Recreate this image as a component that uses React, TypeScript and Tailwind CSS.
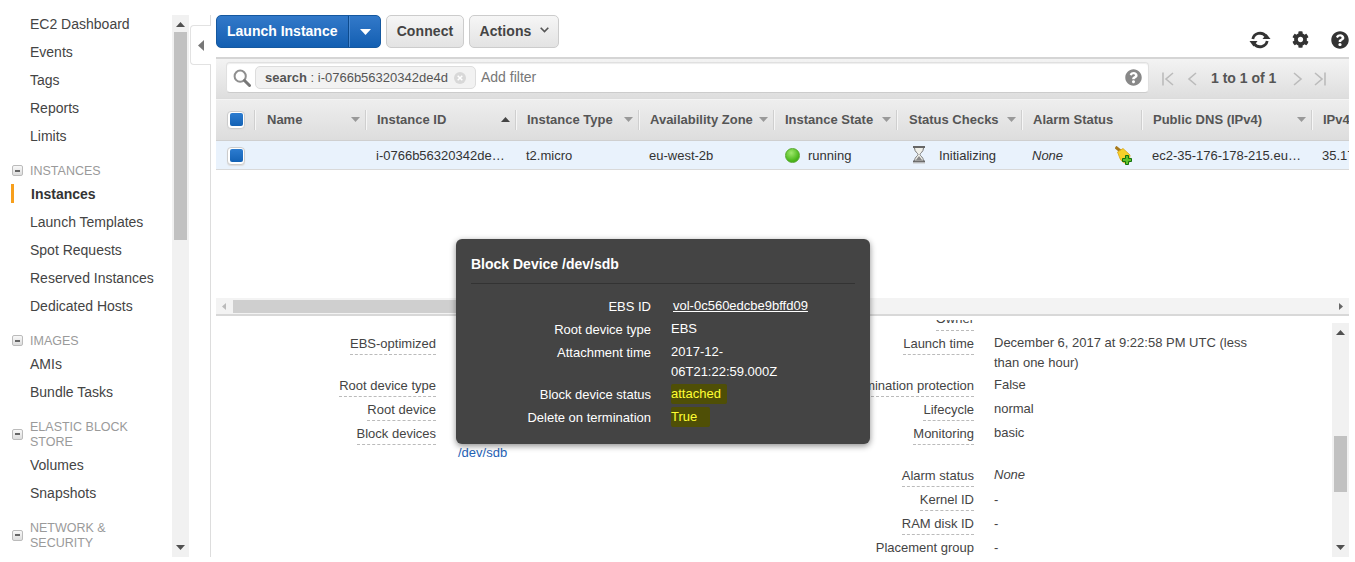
import React from "react";
import { FaCog, FaQuestionCircle } from "react-icons/fa";

const font = "font-['Liberation_Sans',Arial,sans-serif]";

const Caret = ({ up = false, dark = false }: { up?: boolean; dark?: boolean }) => (
  <svg width="9" height="5" viewBox="0 0 9 5" className="shrink-0">
    <path d={up ? "M0 5 L4.5 0 L9 5 Z" : "M0 0 L9 0 L4.5 5 Z"} fill={dark ? "#444" : "#999"} />
  </svg>
);

const Minus = () => (
  <span className="w-[11px] h-[11px] rounded-[2px] border border-[#bbb] bg-gradient-to-b from-[#f8f8f8] to-[#ddd] flex items-center justify-center shrink-0">
    <span className="w-[5px] h-[2px] bg-[#666]" />
  </span>
);

const NavItem = ({ label, active = false }: { label: string; active?: boolean }) => (
  <div className={`h-[28px] flex items-center pl-[30px] text-[14px] relative ${active ? "font-bold text-[#333]" : "text-[#444]"}`}>
    {active && <span className="absolute left-[11px] top-[4px] w-[3px] h-[19px] bg-[#f79f1c]" />}
    <span className={active ? "pl-px" : ""}>{label}</span>
  </div>
);

const NavHead = ({ lines, className = "" }: { lines: string[]; className?: string }) => (
  <div className={`flex items-center pl-[12px] gap-[7px] text-[12.5px] leading-[15px] text-[#9a9a9a] ${className}`}>
    <Minus />
    <div className="relative top-px">
      {lines.map((l) => (
        <div key={l}>{l}</div>
      ))}
    </div>
  </div>
);

const Sidebar = () => (
  <div className="w-[172px] shrink-0 -mt-[5px]">
    <NavItem label="EC2 Dashboard" />
    <NavItem label="Events" />
    <NavItem label="Tags" />
    <NavItem label="Reports" />
    <NavItem label="Limits" />
    <NavHead lines={["INSTANCES"]} className="mt-[13px] mb-[2px]" />
    <NavItem label="Instances" active />
    <NavItem label="Launch Templates" />
    <NavItem label="Spot Requests" />
    <NavItem label="Reserved Instances" />
    <NavItem label="Dedicated Hosts" />
    <NavHead lines={["IMAGES"]} className="mt-[13px] mb-[2px]" />
    <NavItem label="AMIs" />
    <NavItem label="Bundle Tasks" />
    <NavHead lines={["ELASTIC BLOCK", "STORE"]} className="mt-[13px] mb-[2px]" />
    <NavItem label="Volumes" />
    <NavItem label="Snapshots" />
    <NavHead lines={["NETWORK &", "SECURITY"]} className="mt-[13px]" />
  </div>
);

const VScroll = ({ thumbTop, thumbH, w = 17 }: { thumbTop: number; thumbH: number; w?: number }) => (
  <div className="h-full bg-[#f1f1f1] relative shrink-0" style={{ width: w }}>
    <svg width="9" height="5" viewBox="0 0 9 5" className="absolute left-[4px] top-[7px]"><path d="M0 5 L4.5 0 L9 5 Z" fill="#505050" /></svg>
    <svg width="9" height="5" viewBox="0 0 9 5" className="absolute left-[4px] bottom-[7px]"><path d="M0 0 L9 0 L4.5 5 Z" fill="#505050" /></svg>
    <div className="absolute left-[2px] right-[2px] bg-[#c1c1c1]" style={{ top: thumbTop, height: thumbH }} />
  </div>
);

const Btn = ({ children, className = "" }: { children: React.ReactNode; className?: string }) => (
  <div className={`h-[33px] rounded-[5px] border border-[#ccc] bg-gradient-to-b from-[#f6f6f6] to-[#e3e3e3] flex items-center justify-center text-[14px] font-bold text-[#444] tracking-[0.1px] ${className}`}>
    {children}
  </div>
);

const Toolbar = () => (
  <div className="h-[42px] flex items-start shrink-0">
    <div className="h-[33px] w-[165px] rounded-[5px] border border-[#15589f] bg-gradient-to-b from-[#3279c9] to-[#125fb2] flex text-white text-[14px] font-bold">
      <div className="w-[132px] flex items-center pl-[10px] border-r border-[#0d4a8c]">Launch Instance</div>
      <div className="flex-1 flex items-center justify-center border-l border-[#4a8bd4]">
        <svg width="11" height="6" viewBox="0 0 11 6"><path d="M0 0 L11 0 L5.5 6 Z" fill="#fff" /></svg>
      </div>
    </div>
    <Btn className="w-[78px] ml-[5px]">Connect</Btn>
    <Btn className="w-[90px] ml-[5px] gap-[8px]">
      Actions
      <svg width="9" height="6" viewBox="0 0 9 6" className="mb-[3px]"><path d="M0.7 0.7 L4.5 4.6 L8.3 0.7" fill="none" stroke="#555" strokeWidth="1.6" /></svg>
    </Btn>
    <div className="ml-auto flex items-center h-[33px] mt-[8px] text-[#333]">
      <svg width="22" height="20" viewBox="0 0 22 20" className="mr-[21px]">
        <path d="M3.8 9 A7.3 7.3 0 0 1 16.6 6" fill="none" stroke="#333" strokeWidth="2.8" />
        <path d="M18.2 11 A7.3 7.3 0 0 1 5.4 14" fill="none" stroke="#333" strokeWidth="2.8" />
        <path d="M13.5 9 L21.5 9 L17.5 4 Z" fill="#333" />
        <path d="M0.5 11 L8.5 11 L4.5 16.5 Z" fill="#333" />
      </svg>
      <FaCog size={17} className="text-[#333] mr-[22px]" />
      <FaQuestionCircle size={18} className="text-[#333]" />
    </div>
  </div>
);

const Chevron = ({ dir, bar = false }: { dir: "l" | "r"; bar?: boolean }) => (
  <svg width="12" height="14" viewBox="0 0 12 14">
    {dir === "l" ? (
      <>
        {bar && <path d="M1 0.5 V13.5" stroke="#bbb" strokeWidth="1.6" />}
        <path d={bar ? "M11 1 L4 7 L11 13" : "M9 1 L2 7 L9 13"} fill="none" stroke="#bbb" strokeWidth="1.6" />
      </>
    ) : (
      <>
        {bar && <path d="M11 0.5 V13.5" stroke="#bbb" strokeWidth="1.6" />}
        <path d={bar ? "M1 1 L8 7 L1 13" : "M3 1 L10 7 L3 13"} fill="none" stroke="#bbb" strokeWidth="1.6" />
      </>
    )}
  </svg>
);

const FilterBar = () => (
  <div className="h-[42px] shrink-0 border-t-2 border-[#d5d5d5] border-b border-b-[#dcdcdc] bg-gradient-to-b from-[#f3f3f3] to-[#dedede] flex items-center pl-[10px] pb-[2px]">
    <div className="w-[923px] h-[31px] rounded-[4px] bg-white border border-[#e0e0e0] border-b-[#ccc] flex items-center pl-[6px] shadow-[inset_0_1px_1px_#eee]">
      <svg width="18" height="18" viewBox="0 0 18 18" className="shrink-0">
        <circle cx="7.2" cy="7.2" r="5.6" fill="none" stroke="#8f8f8f" strokeWidth="2" />
        <path d="M11.5 11.5 L16.5 16.5" stroke="#777" strokeWidth="3" strokeLinecap="round" />
      </svg>
      <div className="ml-[4px] w-[221px] h-[23px] rounded-[5px] border border-[#ddd] bg-[#f2f2f2] flex items-center pl-[9px] text-[13px] text-[#555] whitespace-nowrap shrink-0">
        <span className="font-bold">search</span>
        <span>&nbsp;: i-0766b56320342de4d</span>
        <span className="ml-auto mr-[9px] w-[12px] h-[12px] rounded-full bg-[#d8d8d8] flex items-center justify-center">
          <svg width="6" height="6" viewBox="0 0 6 6"><path d="M0.7 0.7 L5.3 5.3 M5.3 0.7 L0.7 5.3" stroke="#fff" strokeWidth="1.5" /></svg>
        </span>
      </div>
      <span className="ml-[5px] text-[14px] leading-[14px] pb-[2px] text-[#777]">Add filter</span>
      <FaQuestionCircle size={17} className="ml-auto mr-[6px] text-[#888]" />
    </div>
    <div className="flex items-center ml-[13px] mt-[2px]">
      <Chevron dir="l" bar />
      <span className="ml-[13px]"><Chevron dir="l" /></span>
      <span className="ml-[12px] text-[14px] font-bold text-[#555] whitespace-nowrap">1 to 1 of 1</span>
      <span className="ml-[15px]"><Chevron dir="r" /></span>
      <span className="ml-[11px]"><Chevron dir="r" bar /></span>
    </div>
  </div>
);

const gridCols = "grid-cols-[39px_111px_150px_123px_135px_123px_125px_120px_170px_37px]";

const Check = () => (
  <span className="w-[18px] h-[18px] rounded-[4px] border border-[#ccc] bg-white flex items-center justify-center shadow-[0_1px_1px_#ddd]">
    <span className="w-[13px] h-[13px] rounded-[2px] bg-gradient-to-b from-[#2c7cd0] to-[#1362b5]" />
  </span>
);

const HeadCell = ({ label, caret = true, up = false, wide = false }: { label: string; caret?: boolean; up?: boolean; wide?: boolean }) => (
  <div className={`h-[20px] border-l border-[#f6f6f6] shadow-[-1px_0_0_#cfcfcf] flex items-center pr-[6px] font-bold text-[13px] leading-[18px] pb-px text-[#555] whitespace-nowrap overflow-hidden ${wide ? "pl-[11px]" : "pl-[10px]"}`}>
    <span>{label}</span>
    {caret && <span className="ml-auto"><Caret up={up} dark={up} /></span>}
  </div>
);

const Table = () => (
  <div className="shrink-0">
    <div className={`grid ${gridCols} h-[42px] items-center bg-gradient-to-b from-[#eeeeee] to-[#dddddd] border-t border-[#f4f4f4] border-b border-b-[#cfcfcf]`}>
      <div className="flex justify-center pl-px pb-px"><Check /></div>
      <HeadCell label="Name" wide />
      <HeadCell label="Instance ID" up />
      <HeadCell label="Instance Type" />
      <HeadCell label="Availability Zone" />
      <HeadCell label="Instance State" />
      <HeadCell label="Status Checks" wide />
      <HeadCell label="Alarm Status" caret={false} />
      <HeadCell label="Public DNS (IPv4)" />
      <HeadCell label="IPv4" caret={false} />
    </div>
    <div className={`grid ${gridCols} h-[29px] items-center bg-[#e9f2fc] border-b border-[#d9d9d9] text-[13px] text-[#333] whitespace-nowrap overflow-hidden pt-px`}>
      <div className="flex justify-center pl-px"><Check /></div>
      <div />
      <div className="pl-[10px] overflow-hidden">i-0766b56320342de…</div>
      <div className="pl-[10px]">t2.micro</div>
      <div className="pl-[10px]">eu-west-2b</div>
      <div className="pl-[11px] flex items-center gap-[8px]">
        <span className="w-[15px] h-[15px] rounded-full bg-[radial-gradient(circle_at_40%_30%,#9fe86c,#4cb81c_65%,#3a9a12)] border border-[#55a82d]" />
        running
      </div>
      <div className="pl-[15px] flex items-center gap-[13px]">
        <svg width="14" height="18" viewBox="0 0 14 18" className="mb-[2px]">
          <path d="M1 1 H13 M1 15.5 H13" stroke="#666" strokeWidth="2" />
          <path d="M2.5 2 C2.5 6 6 7 6 8.5 C6 10 2.5 11 2.5 15 H11.5 C11.5 11 8 10 8 8.5 C8 7 11.5 6 11.5 2" fill="#f0f0ea" stroke="#777" strokeWidth="1" />
          <path d="M3.5 14.5 L7 10 L10.5 14.5 Z" fill="#888" />
          <path d="M1 17 H13" stroke="#c4c4c4" strokeWidth="1" />
        </svg>
        Initializing
      </div>
      <div className="pl-[10px] flex items-center pr-[8px]">
        <span className="italic">None</span>
        <svg width="18" height="19" viewBox="0 0 18 19" className="ml-auto mr-[1px]">
          <path d="M0.5 1 L6 5.5" stroke="#a8791a" strokeWidth="3" />
          <path d="M2.5 6 L8 2.5 L15 9 L14 17 Q8 18.5 5 12.5 Z" fill="#f7d02a" stroke="#d9a514" strokeWidth="0.8" />
          <path d="M10.5 9.5 h3 v3 h3 v3 h-3 v3 h-3 v-3 h-3 v-3 h3 Z" fill="#5fc22b" stroke="#12700f" strokeWidth="1" />
        </svg>
      </div>
      <div className="pl-[10px] overflow-hidden">ec2-35-176-178-215.eu…</div>
      <div className="pl-[10px] overflow-hidden">35.17</div>
    </div>
  </div>
);

const HScroll = () => (
  <div className="h-[18px] bg-[#f3f3f3] border-b-2 border-[#d8d8d8] flex items-center shrink-0">
    <svg width="4" height="7" viewBox="0 0 4 7" className="ml-[6px]"><path d="M4 0 V7 L0 3.5 Z" fill="#bbb" /></svg>
    <div className="ml-[7px] h-[13px] w-[427px] bg-[#cfcfcf]" />
    <svg width="4" height="7" viewBox="0 0 4 7" className="ml-auto mr-[6px]"><path d="M0 0 V7 L4 3.5 Z" fill="#666" /></svg>
  </div>
);

const Row = ({ label, value, h = 24, italic = false, w }: { label: string; value?: React.ReactNode; h?: number; italic?: boolean; w: number }) => (
  <div className="flex text-[13px]" style={{ height: h }}>
    <div className="shrink-0 flex justify-end" style={{ width: w }}>
      <span className="h-[24px] border-b border-dashed border-[#bbb] text-[#444] leading-[20px] pt-[3px] whitespace-nowrap">{label}</span>
    </div>
    <div className={`ml-[20px] w-[260px] pt-[2px] leading-[20px] text-[#444] ${italic ? "italic" : ""}`}>{value}</div>
  </div>
);

const Details = () => (
  <div className="flex-1 min-h-0 flex overflow-hidden">
    <div className="flex-1 min-w-0 grid grid-cols-[500px_1fr] overflow-hidden">
      <div className="pt-[15px]">
        <Row w={220} h={42} label="EBS-optimized" />
        <Row w={220} label="Root device type" />
        <Row w={220} label="Root device" />
        <Row w={220} label="Block devices" />
        <div className="pl-[242px] text-[13px] leading-[16px] text-[#1f62b5]">/dev/sdb</div>
      </div>
      <div className="pt-[4px]">
        <div className="flex justify-end w-[258px]">
          <div className="h-[11px] overflow-hidden border-b border-dashed border-[#bbb] flex items-end pb-px text-[13px] leading-[20px] text-[#444]">
            <span>Owner</span>
          </div>
        </div>
        <Row w={258} h={42} label="Launch time" value="December 6, 2017 at 9:22:58 PM UTC (less than one hour)" />
        <Row w={258} label="Termination protection" value="False" />
        <Row w={258} label="Lifecycle" value="normal" />
        <Row w={258} h={42} label="Monitoring" value="basic" />
        <Row w={258} label="Alarm status" italic value="None" />
        <Row w={258} label="Kernel ID" value={<span className="block pt-px">-</span>} />
        <Row w={258} label="RAM disk ID" value={<span className="block pt-px">-</span>} />
        <Row w={258} label="Placement group" value={<span className="block pt-px">-</span>} />
      </div>
    </div>
    <div className="h-full pt-[7px] shrink-0">
      <VScroll thumbTop={113} thumbH={56} w={17} />
    </div>
  </div>
);

const TipRow = ({ label, children, h = 23 }: { label: string; children: React.ReactNode; h?: number }) => (
  <div className="flex text-[13px] leading-[20px]" style={{ minHeight: h }}>
    <div className="w-[180px] text-right text-white shrink-0">{label}</div>
    <div className="ml-[20px] w-[110px] -mt-px text-white">{children}</div>
  </div>
);

const Tooltip = () => (
  <div className="absolute left-[456px] top-[239px] w-[414px] h-[205px] rounded-[6px] bg-[#444444] shadow-[0_2px_6px_rgba(0,0,0,0.45)] px-[15px] pt-[16px] text-white">
    <div className="text-[14px] font-bold leading-[18px] pb-[10px] border-b border-[#333]">Block Device /dev/sdb</div>
    <div className="mt-[13px]">
      <TipRow label="EBS ID"><span className="ml-[2px] underline whitespace-nowrap">vol-0c560edcbe9bffd09</span></TipRow>
      <TipRow label="Root device type">EBS</TipRow>
      <TipRow label="Attachment time" h={42}>2017-12-06T21:22:59.000Z</TipRow>
      <TipRow label="Block device status">
        <span className="block w-[56px] h-[20px] bg-[#4f4f06] rounded-[2px] text-[#ffff33]">attached</span>
      </TipRow>
      <TipRow label="Delete on termination">
        <span className="block w-[39px] h-[20px] bg-[#4f4f06] rounded-[2px] text-[#ffff33]">True</span>
      </TipRow>
    </div>
  </div>
);

export default function App() {
  return (
    <div className={`relative w-[1355px] h-[562px] overflow-hidden bg-white ${font}`}>
      <div className="flex h-[542px] mt-[15px] w-[1349px]">
        <Sidebar />
        <VScroll thumbTop={17} thumbH={208} />
        <div className="relative w-[22px] shrink-0 border-r border-[#ddd] mr-[5px]">
          <div className="absolute left-[1px] right-[-1px] top-[10px] h-[40px] bg-white border border-r-0 border-[#e2e2e2] rounded-l-[4px] flex items-center pl-[7px]">
            <svg width="6" height="11" viewBox="0 0 6 11"><path d="M6 0 V11 L0 5.5 Z" fill="#777" /></svg>
          </div>
        </div>
        <div className="flex-1 min-w-0 flex flex-col">
          <Toolbar />
          <FilterBar />
          <Table />
          <div className="h-[128px] shrink-0" />
          <HScroll />
          <Details />
        </div>
      </div>
      <Tooltip />
    </div>
  );
}
